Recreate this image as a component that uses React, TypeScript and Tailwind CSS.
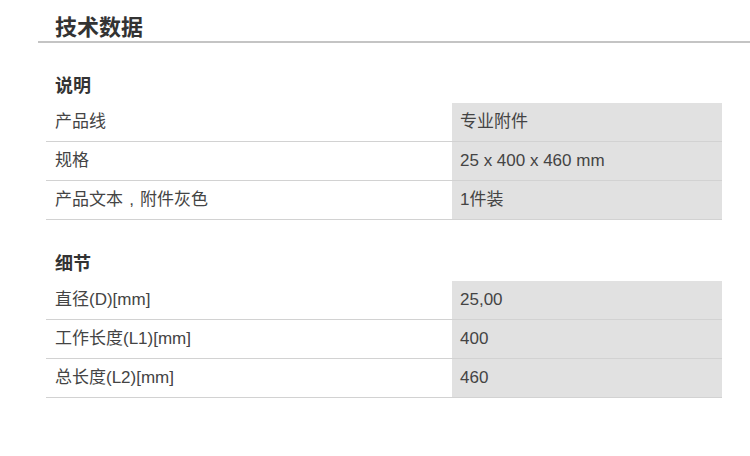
import type { ReactNode } from 'react';

const font = { fontFamily: '"Liberation Sans", "Noto Sans CJK SC", sans-serif' };

const sections: { title: string; rows: [ReactNode, string][] }[] = [
  {
    title: '说明',
    rows: [
      ['产品线', '专业附件'],
      ['规格', '25 x 400 x 460 mm'],
      [
        <>
          产品文本<span className="inline-block w-[1em] text-center">,</span>附件灰色
        </>,
        '1件装',
      ],
    ],
  },
  {
    title: '细节',
    rows: [
      ['直径(D)[mm]', '25,00'],
      ['工作长度(L1)[mm]', '400'],
      ['总长度(L2)[mm]', '460'],
    ],
  },
];

export default function App() {
  return (
    <div className="w-[750px] h-[456px] bg-white text-[#444]" style={font}>
      <div className="ml-[38px] pt-[14px] border-b-2 border-[#c4c4c4]">
        <h1 className="pl-[17px] text-[22px] leading-[27px] font-bold text-[#333]">技术数据</h1>
      </div>

      <div className="w-[676px] ml-[46px]">
        {sections.map((s, si) => (
          <div key={s.title} className={si === 0 ? 'mt-[27px]' : 'mt-[28px]'}>
            <h2 className="h-[33px] flex items-center pl-[9px] text-[18px] font-bold text-[#333]">
              {s.title}
            </h2>
            {s.rows.map(([label, value]) => (
              <div key={value} className="flex h-[39px] border-b border-[#d2d2d2] text-[17px]">
                <div className="w-[406px] pl-[9px] flex items-center">{label}</div>
                <div className="flex-1 bg-[#e1e1e1] pl-[8px] flex items-center">{value}</div>
              </div>
            ))}
          </div>
        ))}
      </div>
    </div>
  );
}
